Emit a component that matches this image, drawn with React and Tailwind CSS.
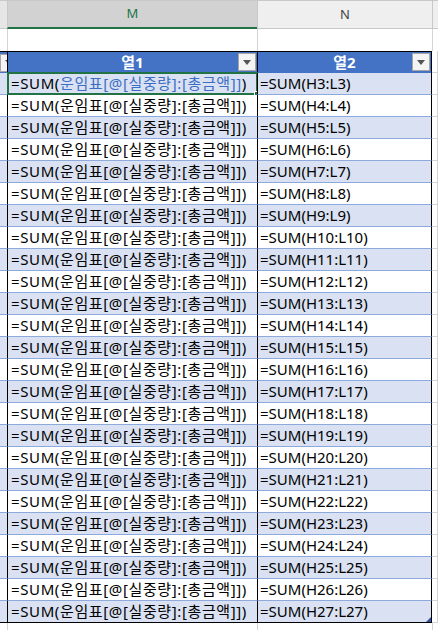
const font = { fontFamily: '"Noto Sans", "Noto Sans CJK KR", sans-serif' };

function FilterButton() {
  return (
    <div className="flex h-[18px] w-[18px] items-center justify-center border border-[#a6a6a6] bg-[#f4f4f4]">
      <svg width="8" height="5" viewBox="0 0 8 5">
        <path d="M0 0 L8 0 L4 5 Z" fill="#555" />
      </svg>
    </div>
  );
}

function Row({ n, band, last, active }) {
  const bg = band ? "bg-[#d9e1f2]" : "bg-white";
  const line = last ? "border-b-black" : "border-b-[#8ea9db]";
  return (
    <div className="flex h-[22px]">
      <div className={`w-[7px] border-b ${line} ${bg}`}></div>
      <div className={`relative flex w-[250px] items-center border-b border-l border-l-black pl-[3px] text-[15px] leading-none tracking-[0.62px] text-black ${line} ${bg}`}>
        <span className="whitespace-nowrap">
          =SUM(
          <span className={active ? "text-[#3b6fc4]" : ""}>운임표[@[실중량]:[총금액]]</span>)
        </span>
        {active && (
          <>
            <div className="pointer-events-none absolute -left-[1px] -top-[1px] h-[23px] w-[251px] border-2 border-[#217346]"></div>
            <div className="absolute -bottom-[3px] -right-[3px] h-[6px] w-[6px] border border-white bg-[#217346]"></div>
          </>
        )}
      </div>
      <div className={`relative flex w-[175px] items-center border-b border-l border-r border-l-black border-r-black pl-[2px] text-[15px] leading-none text-black ${line} ${bg}`}>
        <span className="whitespace-nowrap">{`=SUM(H${n}:L${n})`}</span>
        {last && (
          <svg className="absolute bottom-0 right-0" width="5" height="5" viewBox="0 0 5 5">
            <path d="M5 0 L5 5 L0 5 Z" fill="#2f4f9f" />
          </svg>
        )}
      </div>
      <div className="w-[6px] border-b border-r border-[#d4d4d4] bg-white"></div>
    </div>
  );
}

export default function App() {
  const rows = Array.from({ length: 25 }, (_, i) => i + 3);
  return (
    <div className="h-[630px] w-[438px] overflow-hidden bg-white" style={font}>
      {/* column letters */}
      <div className="flex h-[29px] border-t border-[#c8c8c8]">
        <div className="w-[7px] border-b border-[#c8c8c8] bg-[#e6e6e6]"></div>
        <div className="flex w-[250px] items-center justify-center border-b-2 border-l border-b-[#217346] border-l-[#c8c8c8] bg-[#d2d2d2] text-[13px] text-[#217346]">
          M
        </div>
        <div className="flex w-[175px] items-center justify-center border-b border-l border-[#c8c8c8] bg-[#efefef] text-[13px] text-[#444]">
          N
        </div>
        <div className="w-[6px] border-b border-l border-[#c8c8c8] bg-[#efefef]"></div>
      </div>

      {/* blank row */}
      <div className="flex h-[22px]">
        <div className="w-[7px] bg-white"></div>
        <div className="w-[250px] border-l border-[#d4d4d4]"></div>
        <div className="w-[175px] border-l border-[#d4d4d4]"></div>
        <div className="w-[6px] border-l border-[#d4d4d4]"></div>
      </div>

      {/* table header */}
      <div className="flex h-[22px]">
        <div className="flex w-[7px] items-center justify-end overflow-hidden border-t border-black bg-[#4472c4]">
          <div className="-mr-[11px] shrink-0">
            <FilterButton />
          </div>
        </div>
        <div className="relative flex w-[250px] items-center justify-center border-l border-t border-black bg-[#4472c4] text-[15px] font-bold text-white">
          열1
          <div className="absolute right-[1px] top-[1px]">
            <FilterButton />
          </div>
        </div>
        <div className="relative flex w-[175px] items-center justify-center border-l border-r border-t border-black bg-[#4472c4] text-[15px] font-bold text-white">
          열2
          <div className="absolute right-[1px] top-[1px]">
            <FilterButton />
          </div>
        </div>
        <div className="w-[6px] border-b border-r border-[#d4d4d4] bg-white"></div>
      </div>

      {rows.map((n, i) => (
        <Row key={n} n={n} band={i % 2 === 0} last={i === rows.length - 1} active={i === 0} />
      ))}

      {/* below table */}
      <div className="flex h-[10px]">
        <div className="w-[7px]"></div>
        <div className="w-[250px] border-l border-[#d4d4d4]"></div>
        <div className="w-[175px] border-l border-[#d4d4d4]"></div>
        <div className="w-[6px] border-l border-[#d4d4d4]"></div>
      </div>
    </div>
  );
}
